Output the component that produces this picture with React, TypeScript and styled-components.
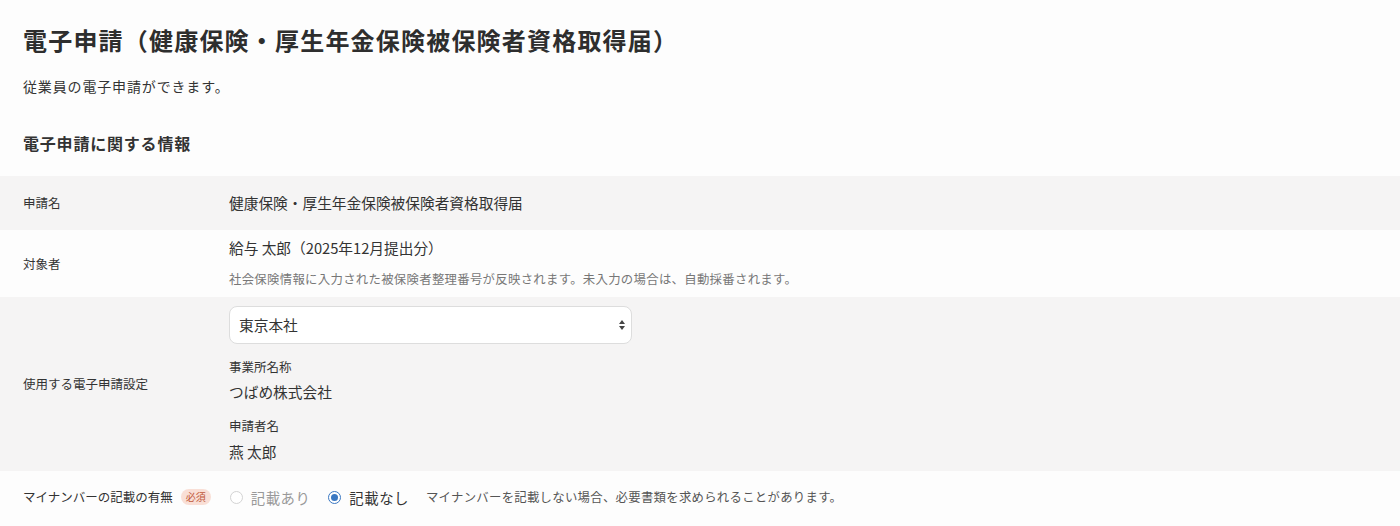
import React from "react";
import styled, { createGlobalStyle } from "styled-components";

const Global = createGlobalStyle`
  html, body { margin: 0; padding: 0; background: #fdfdfd; }
  body { font-family: "Noto Sans CJK JP", "Noto Sans", sans-serif; color: #333; }
`;

const Page = styled.div`
  width: 1400px;
  padding-top: 24px;
`;

const Title = styled.h1`
  margin: 0 23px;
  font-size: 24px;
  line-height: 32px;
  font-weight: 700;
  letter-spacing: 1.2px;
  color: #2e2e2e;
`;

const Lead = styled.p`
  margin: 20px 23px 0;
  font-size: 14px;
  line-height: 20px;
  letter-spacing: 0.85px;
`;

const SectionTitle = styled.h2`
  margin: 35px 23px 0;
  font-size: 16px;
  line-height: 24px;
  font-weight: 700;
  letter-spacing: 0.8px;
`;

const Table = styled.div`
  margin-top: 21px;
  display: flex;
  flex-direction: column;
`;

const Row = styled.div<{ $shade?: boolean; $minH?: number }>`
  display: grid;
  grid-template-columns: 206px 1fr;
  align-items: center;
  background: ${(p) => (p.$shade ? "#f5f4f4" : "#fdfdfd")};
  min-height: ${(p) => p.$minH ?? 54}px;
  padding: 0 23px;
`;

const Label = styled.div`
  font-size: 12.5px;
  line-height: 18px;
  display: flex;
  align-items: center;
  gap: 8px;
`;

const Value = styled.div<{ $padBottom?: number }>`
  font-size: 14.7px;
  line-height: 22px;
  display: flex;
  flex-direction: column;
  padding-bottom: ${(p) => p.$padBottom ?? 0}px;
`;

const Note = styled.div`
  font-size: 12.4px;
  line-height: 18px;
  color: #777;
  margin-top: 11px;
  letter-spacing: 0.29px;
`;

const Stack = styled.div`
  display: flex;
  flex-direction: column;
  padding: 8px 0 8px;
`;

const Select = styled.div`
  width: 403px;
  height: 38px;
  box-sizing: border-box;
  border: 1px solid #ddd;
  border-radius: 8px;
  background: #fff;
  display: flex;
  align-items: center;
  justify-content: space-between;
  padding: 0 5px 0 9px;
  font-size: 14.7px;
  margin-bottom: 8px;
`;

const SubLabel = styled.div<{ $mt: number }>`
  font-size: 12.5px;
  line-height: 18px;
  margin-top: ${(p) => p.$mt}px;
`;

const SubValue = styled.div<{ $mt: number }>`
  font-size: 14.7px;
  line-height: 22px;
  margin-top: ${(p) => p.$mt}px;
`;

const Badge = styled.span`
  display: inline-flex;
  align-items: center;
  justify-content: center;
  height: 16px;
  padding: 0 5px;
  border-radius: 8px;
  background: #f9dfd6;
  color: #c15a3c;
  font-size: 10px;
  line-height: 16px;
`;

const RadioRow = styled.div`
  display: flex;
  align-items: center;
`;

const RadioGroup = styled.div`
  display: flex;
  align-items: center;
  gap: 18px;
  margin-left: 19px;
`;

const RadioItem = styled.label<{ $disabled?: boolean }>`
  display: flex;
  align-items: center;
  gap: 8px;
  font-size: 14.4px;
  letter-spacing: 0.5px;
  color: ${(p) => (p.$disabled ? "#999" : "#333")};
`;

const RadioCircle = styled.span<{ $checked?: boolean }>`
  width: 13px;
  height: 13px;
  box-sizing: border-box;
  border-radius: 50%;
  border: 1px solid ${(p) => (p.$checked ? "#3a78c2" : "#d3d3d3")};
  background: #fff;
  display: inline-flex;
  align-items: center;
  justify-content: center;
  &::after {
    content: "";
    width: 7px;
    height: 7px;
    border-radius: 50%;
    background: ${(p) => (p.$checked ? "#3a78c2" : "transparent")};
  }
`;

const InlineNote = styled.span`
  font-size: 12.4px;
  color: #555;
  margin-left: 17px;
  letter-spacing: 0.27px;
`;

const BottomRow = styled.div`
  background: #fdfdfd;
  height: 52px;
  padding: 0 23px;
  display: flex;
  align-items: center;
`;

const Arrows = () => (
  <svg width="8" height="12" viewBox="0 0 8 12">
    <path d="M4 1 L7 5 L1 5 Z" fill="#444" />
    <path d="M4 11 L7 7 L1 7 Z" fill="#444" />
  </svg>
);

export default function App() {
  return (
    <>
      <Global />
      <Page>
        <Title>電子申請（健康保険・厚生年金保険被保険者資格取得届）</Title>
        <Lead>従業員の電子申請ができます。</Lead>
        <SectionTitle>電子申請に関する情報</SectionTitle>
        <Table>
          <Row $shade>
            <Label>申請名</Label>
            <Value>健康保険・厚生年金保険被保険者資格取得届</Value>
          </Row>
          <Row $minH={67}>
            <Label>対象者</Label>
            <Value $padBottom={3}>
              <span>給与 太郎（2025年12月提出分）</span>
              <Note>社会保険情報に入力された被保険者整理番号が反映されます。未入力の場合は、自動採番されます。</Note>
            </Value>
          </Row>
          <Row $shade $minH={174}>
            <Label>使用する電子申請設定</Label>
            <Stack>
              <Select>
                <span>東京本社</span>
                <Arrows />
              </Select>
              <SubLabel $mt={6}>事業所名称</SubLabel>
              <SubValue $mt={5}>つばめ株式会社</SubValue>
              <SubLabel $mt={14}>申請者名</SubLabel>
              <SubValue $mt={6}>燕 太郎</SubValue>
            </Stack>
          </Row>
          <BottomRow>
            <RadioRow>
              <Label>
                マイナンバーの記載の有無
                <Badge>必須</Badge>
              </Label>
              <RadioGroup>
                <RadioItem $disabled>
                  <RadioCircle />
                  記載あり
                </RadioItem>
                <RadioItem>
                  <RadioCircle $checked />
                  記載なし
                </RadioItem>
              </RadioGroup>
              <InlineNote>マイナンバーを記載しない場合、必要書類を求められることがあります。</InlineNote>
            </RadioRow>
          </BottomRow>
        </Table>
      </Page>
    </>
  );
}
